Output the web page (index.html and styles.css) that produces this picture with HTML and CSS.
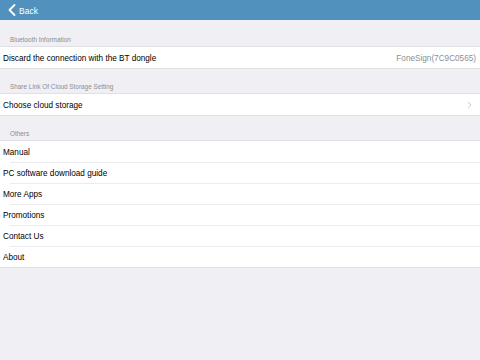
FILE: index.html
```html
<!DOCTYPE html>
<html lang="en">
  <head>
    <meta charset="UTF-8" />
    <meta name="viewport" content="width=device-width, initial-scale=1.0" />
    <title>Settings</title>
    <link rel="stylesheet" href="styles.css">
  </head>
  <body>
    <div class="navbar">
      <a class="back" href="#">
        <svg class="back-icon" width="8" height="12" viewBox="0 0 8 12">
          <path d="M6.5 1 L1.5 6 L6.5 11" fill="none" stroke="#ffffff" stroke-width="1.8" stroke-linecap="round" stroke-linejoin="round" />
        </svg>
        <span>Back</span>
      </a>
    </div>

    <div class="section-title first">Bluetooth Information</div>
    <div class="group">
      <div class="row">
        <span class="label">Discard the connection with the BT dongle</span>
        <span class="detail">FoneSign(7C9C0565)</span>
      </div>
    </div>

    <div class="section-title">Share Link Of Cloud Storage Setting</div>
    <div class="group">
      <div class="row">
        <span class="label">Choose cloud storage</span>
        <svg class="chevron" width="5" height="8" viewBox="0 0 5 8">
          <path d="M1 1 L4 4 L1 7" fill="none" stroke="#c7c7cc" stroke-width="1" />
        </svg>
      </div>
    </div>

    <div class="section-title">Others</div>
    <div class="group">
      <div class="row"><span class="label">Manual</span></div>
      <div class="row"><span class="label">PC software download guide</span></div>
      <div class="row"><span class="label">More Apps</span></div>
      <div class="row"><span class="label">Promotions</span></div>
      <div class="row"><span class="label">Contact Us</span></div>
      <div class="row"><span class="label">About</span></div>
    </div>
  </body>
</html>
```

FILE: styles.css
```css
* {
  margin: 0;
  padding: 0;
  box-sizing: border-box;
}

body {
  background-color: #efeff4;
  font-family: "Liberation Sans", Arial, sans-serif;
  color: #000000;
  height: 360px;
}

.navbar {
  height: 20px;
  background-color: #5091bd;
  display: flex;
  align-items: center;
  padding-left: 8px;
}

.back {
  display: flex;
  align-items: center;
  gap: 3px;
  color: #ffffff;
  text-decoration: none;
  font-size: 8.5px;
  padding-top: 1px;
}

.back-icon {
  display: block;
  margin-top: -1px;
}

.section-title {
  height: 24px;
  padding: 0 10px 3px;
  display: flex;
  align-items: flex-end;
  font-size: 6.4px;
  color: #8e8e93;
}

.section-title.first {
  height: 26px;
}

.group {
  background-color: #ffffff;
  border-top: 1px solid #e0e0e5;
  border-bottom: 1px solid #e0e0e5;
}

.row {
  height: 21px;
  display: flex;
  align-items: center;
  justify-content: space-between;
  padding: 1px 4px 0 3px;
  font-size: 8.2px;
  position: relative;
}

.row + .row::before {
  content: "";
  position: absolute;
  top: 0;
  left: 10px;
  right: 0;
  border-top: 1px solid #ececf0;
}

.detail {
  color: #8e8e93;
}

.chevron {
  margin-right: 4px;
}
```
